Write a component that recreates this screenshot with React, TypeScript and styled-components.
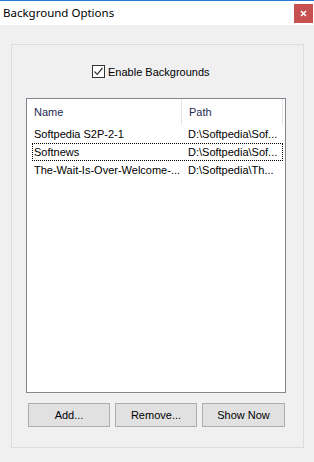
import React from "react";
import styled, { createGlobalStyle } from "styled-components";

const GlobalStyle = createGlobalStyle`
  html, body {
    margin: 0;
    padding: 0;
    background: #f0f0f0;
  }
  * {
    box-sizing: border-box;
  }
`;

const Window = styled.div`
  width: 314px;
  height: 462px;
  display: flex;
  flex-direction: column;
  background: #f0f0f0;
  font-family: "Liberation Sans", Arial, sans-serif;
  font-size: 11px;
  color: #000;
  overflow: hidden;
`;

const TitleBar = styled.div`
  height: 25px;
  flex-shrink: 0;
  border-top: 1px solid #2b79d0;
  background: #fff;
  display: flex;
  align-items: center;
  justify-content: space-between;
  padding: 0 1px 0 3px;
  .title {
    font-family: "Noto Sans", "Open Sans", sans-serif;
    font-size: 11.5px;
    color: #000;
    margin-top: -1px;
  }
`;

const CloseButton = styled.div`
  width: 19px;
  height: 19px;
  margin-top: 1px;
  background: #c75050;
  display: flex;
  align-items: center;
  justify-content: center;
`;

const Group = styled.div`
  margin: 19px 10px 14px 11px;
  border: 1px solid #dcdcdc;
  padding: 20px 0 20px 14px;
  display: flex;
  flex-direction: column;
  flex: 1;
`;

const CheckRow = styled.label`
  display: flex;
  align-items: center;
  gap: 3px;
  margin: 0 0 20px 66px;
  height: 13px;
  .box {
    width: 13px;
    height: 13px;
    border: 1px solid #333;
    background: #fff;
    display: flex;
    align-items: center;
    justify-content: center;
  }
`;

const ListBox = styled.div`
  width: 260px;
  height: 295px;
  margin-bottom: 10px;
  border: 1px solid #828790;
  background: #fff;
  display: flex;
  flex-direction: column;
`;

const Header = styled.div`
  display: flex;
  height: 26px;
`;

const HeaderCell = styled.div<{ $w: number }>`
  width: ${(p) => p.$w}px;
  border-right: 1px solid #e5e5e5;
  padding-left: 7px;
  display: flex;
  align-items: center;
  color: #1e2a52;
`;

const Row = styled.div<{ $focused?: boolean }>`
  margin-left: 5px;
  width: 251px;
  height: 18px;
  display: grid;
  grid-template-columns: 149px 1fr;
  align-items: center;
  outline: ${(p) => (p.$focused ? "1px dotted #000" : "none")};
  outline-offset: -1px;
  .name {
    padding-left: 2px;
    white-space: nowrap;
    overflow: hidden;
  }
  .path {
    padding-left: 7px;
    white-space: nowrap;
    overflow: hidden;
  }
`;

const ButtonRow = styled.div`
  display: flex;
  gap: 5px;
  margin-left: 2px;
`;

const Button = styled.button<{ $w?: number }>`
  width: ${(p) => p.$w ?? 82}px;
  height: 24px;
  background: #e1e1e1;
  border: 1px solid #adadad;
  font-family: "Liberation Sans", Arial, sans-serif;
  font-size: 11px;
  color: #000;
  padding: 0;
`;

const rows = [
  { name: "Softpedia S2P-2-1", path: "D:\\Softpedia\\Sof..." },
  { name: "Softnews", path: "D:\\Softpedia\\Sof...", focused: true },
  { name: "The-Wait-Is-Over-Welcome-...", path: "D:\\Softpedia\\Th..." },
];

export default function App() {
  return (
    <>
      <GlobalStyle />
      <Window>
        <TitleBar>
          <span className="title">Background Options</span>
          <CloseButton>
            <svg width="7" height="7" viewBox="0 0 7 7">
              <path d="M1 1 L6 6 M6 1 L1 6" stroke="#fff" strokeWidth="1.6" />
            </svg>
          </CloseButton>
        </TitleBar>
        <Group>
          <CheckRow>
            <span className="box">
              <svg width="11" height="11" viewBox="0 0 11 11">
                <path d="M1.5 5.5 L4.2 8.3 L9.5 2" fill="none" stroke="#333" strokeWidth="1.2" />
              </svg>
            </span>
            Enable Backgrounds
          </CheckRow>
          <ListBox>
            <Header>
              <HeaderCell $w={155}>Name</HeaderCell>
              <HeaderCell $w={101}>Path</HeaderCell>
            </Header>
            {rows.map((r) => (
              <Row key={r.name} $focused={r.focused}>
                <span className="name">{r.name}</span>
                <span className="path">{r.path}</span>
              </Row>
            ))}
          </ListBox>
          <ButtonRow>
            <Button>Add...</Button>
            <Button>Remove...</Button>
            <Button $w={83}>Show Now</Button>
          </ButtonRow>
        </Group>
      </Window>
    </>
  );
}
